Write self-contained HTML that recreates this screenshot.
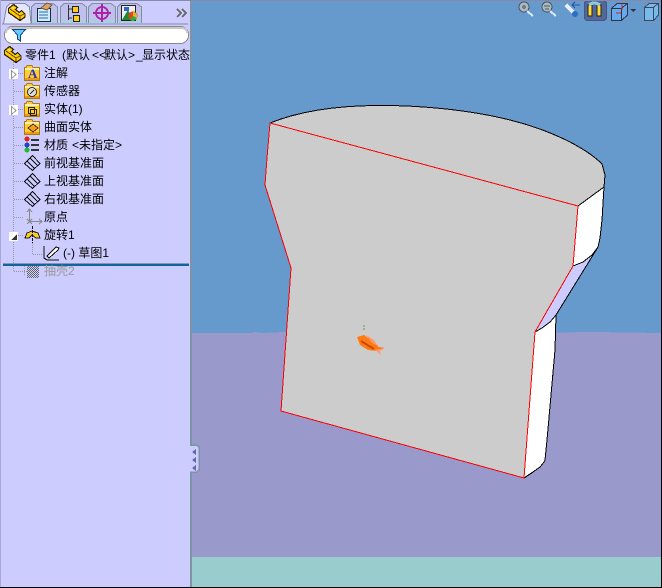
<!DOCTYPE html>
<html><head><meta charset="utf-8"><style>
html,body{margin:0;padding:0;width:662px;height:588px;overflow:hidden;background:#6699cc}
svg{display:block;position:absolute;left:0;top:0}
text{font-family:"WenQuanYi Zen Hei","Liberation Sans","Noto Sans CJK SC",sans-serif;font-size:12px;fill:#000}
</style></head><body>
<svg width="662" height="588" viewBox="0 0 662 588" shape-rendering="crispEdges">
<defs>
<pattern id="dith" width="2" height="2" patternUnits="userSpaceOnUse"><rect width="2" height="2" fill="#ccccff"/><rect width="1" height="1" fill="#666"/><rect x="1" y="1" width="1" height="1" fill="#666"/></pattern>
<g id="fld"><path d="M0.500 2.500H2L3 0.500H8L9 2.500H15.500V15.500H0.500Z" fill="#ffcc33" stroke="#a87a10"/><path d="M1 3h14v2H1z" fill="#fff0b0"/><path d="M1 13h14v2H1z" fill="#ee9911"/></g>
<g id="pl"><path d="M0.500 8.500L8.500 0.500L16 8.500L8.500 15.500Z" fill="none" stroke="#111"/><path d="M3 6L11 14M6 3L14 11" fill="none" stroke="#111"/></g>
<g id="part"><path d="M0.500 4.500L5.500 0.500L9.500 3.500L7.500 5.500L11.500 8.500L13.500 6.500L17 10V13L12 16.500L0.500 8.500Z" fill="#ffcc00" stroke="#332200" stroke-width="1.300"/><path d="M2 5L12 12M12 12V16M12 12L16 10" fill="none" stroke="#664400"/><path d="M4 3L7 4L5 5Z" fill="#ffee99"/></g>
<g id="exp"><rect x="-1" y="-1" width="9" height="10" fill="#fff"/><path d="M1.500 0.500L6 4.500L1.500 8.500Z" fill="#fff" stroke="#999"/></g>
</defs>

<!-- viewport -->
<rect x="191" y="0" width="471" height="588" fill="#6699cc"/>
<path d="M191 333h60l4-1 8 1 20-1 30 1 40-1 60 1 50-1 60 1 70-1 70 1V557H191Z" fill="#9999cc"/>
<rect x="191" y="557" width="471" height="30" fill="#99cccc"/>

<!-- part -->
<path d="M578 206L593 195L604 187L602 220L600 238L598 247L592 255L583 262L573 266Z" fill="#fff"/>
<path d="M573 266L583 262L592 255L598 247L556 315L550 322L542 328L535 332Z" fill="#ccccff"/>
<path d="M535 332L542 328L550 322L556 315L555 350L547 440L545 460L544 462L540 467L533 472L524 478Z" fill="#fff"/>
<path d="M270 123C295 113 330 106 375 105.500C420 105 470 110 510 120C550 130 585 147 602 164L605 175L604 187L593 195L578 206L573 266L535 332L524 478L281 411L291 268L265 185L267 158Z" fill="#cccccc"/>
<g fill="none" stroke="#000" stroke-width="1">
<path d="M270 123C295 113 330 106 375 105.500C420 105 470 110 510 120C550 130 585 147 602 164L605 175L604 187L602 220L600 238L598 247L556 315"/>
<path d="M578 206L593 195L604 187"/>
<path d="M573 266L583 262L592 255L598 247"/>
<path d="M535 332L542 328L550 322L556 315L555 350L547 440L545 460L544 462L540 467L533 472L524 478"/>
</g>
<g fill="none" stroke="#f00" stroke-width="1">
<path d="M270 123L578 206L573 266L535 332L524 478L281 411L291 268L265 185L267 158Z"/>
</g>

<!-- fish -->
<path d="M357 337L364 335L372 341L379 347L385 348L380 351L381 356L376 351L368 350L360 345Z" fill="#ff7a10"/>
<path d="M374 350L380 349L385 348L380 351L381 356L376 351Z" fill="#ff9a80"/>
<path d="M366 335L374 340L378 346L372 343Z" fill="#ff9a70"/>
<path d="M361 341L374 349" stroke="#c84a00" stroke-width="2" fill="none"/>
<rect x="363" y="325" width="2" height="2" fill="#a0b0a0"/><rect x="363" y="328" width="2" height="2" fill="#c0a080"/>

<!-- viewport toolbar -->
<rect x="584.500" y="0.500" width="22" height="20" rx="3" fill="#556699" stroke="#445588"/>
<rect x="588" y="5" width="4" height="11" fill="#ffdd33" stroke="#222" stroke-width=".8"/>
<rect x="597" y="5" width="4" height="11" fill="#ffdd33" stroke="#222" stroke-width=".8"/>
<path d="M589 5Q594 1 600 5" fill="none" stroke="#88ccdd" stroke-width="3"/>
<circle cx="524" cy="7" r="5" fill="#aabbc0" stroke="#445566"/><circle cx="524" cy="7" r="2" fill="#778"/><path d="M527 11L533 16" stroke="#dde6ff" stroke-width="2"/>
<circle cx="547" cy="7" r="5" fill="#aabbc0" stroke="#445566"/><path d="M544 6h6M545 9h4" stroke="#556"/><path d="M550 11L556 16" stroke="#dde6ff" stroke-width="2"/>
<path d="M566 5L575 14" stroke="#e4eeff" stroke-width="4"/><circle cx="575" cy="14" r="3" fill="#2f6fc4"/><path d="M572 5h8M575 2l-3 3 3 3" stroke="#2255aa" fill="none"/>
<path d="M611.500 8.500L617 3.500H627.500V15L621.500 20.500H611.500Z" fill="#66aaee" stroke="#334"/><path d="M611.500 8.500H621.500V20M621.500 8.500L627 3.500" fill="none" stroke="#334"/><path d="M622 4v6M616 13h5" stroke="#dd2222"/>
<path d="M630 9h6l-3 3z" fill="#334"/>
<path d="M644.500 7.500L649 3.500H658.500V15L653.500 20.500H644.500Z" fill="#77bbee" stroke="#445"/><path d="M644.500 7.500H653.500V20M653.500 7.500L658 3.500" fill="none" stroke="#445"/>

<!-- sidebar -->
<rect x="0" y="0" width="190" height="588" fill="#ccccff"/>
<rect x="190" y="0" width="2" height="445" fill="#7f93a6"/>
<rect x="190" y="472" width="2" height="116" fill="#7f93a6"/>
<rect x="0" y="0" width="662" height="1" fill="#8888aa"/>
<rect x="0" y="0" width="1" height="588" fill="#a8a8d8"/>
<!-- handle -->
<rect x="190" y="445" width="9" height="27" fill="#ccccff"/>
<path d="M190 445H197L199 447V470L197 472H190" fill="none" stroke="#7f93a6" stroke-width="1.500"/>
<path d="M192 452L196 449V455ZM192 460L196 457V463ZM192 468L196 465V471Z" fill="#6666aa"/>

<!-- tabs -->
<g>
<path d="M31.500 23V7L35 3.500H53L57.500 7V23" fill="#c0c0ec" stroke="#7f8fa0"/>
<path d="M60.500 23V7L64 3.500H82L86.500 7V23" fill="#c0c0ec" stroke="#7f8fa0"/>
<path d="M88.500 23V7L92 3.500H111L115.500 7V23" fill="#c0c0ec" stroke="#7f8fa0"/>
<path d="M117.500 23V7L121 3.500H137L141.500 7V23" fill="#c0c0ec" stroke="#7f8fa0"/>
<path d="M32 20H57V23H32ZM61 20H86V23H61ZM89 20H115V23H89ZM118 20H141V23H118Z" fill="#a8d0e0"/>
<path d="M3.500 24L6.500 7L10 3.500H25L29.500 7L31 24" fill="#e6e6ff" stroke="#7f8fa0"/>
<use href="#part" x="8" y="4"/>
<rect x="37.500" y="8.500" width="13" height="13" fill="#cceeff" stroke="#224"/><path d="M39 12h9M39 15h9M39 18h9" stroke="#3366aa"/><path d="M41 8L47 3L52 5L47 10Z" fill="#e8a060" stroke="#664"/>
<path d="M68.500 5V20M68 9H72M68 18H72" stroke="#333" fill="none"/><rect x="72.500" y="6.500" width="6" height="6" fill="#ffcc22" stroke="#222"/><rect x="73.500" y="15.500" width="6" height="6" fill="#ffcc22" stroke="#222"/>
<circle cx="102" cy="13" r="6" fill="none" stroke="#aa22aa" stroke-width="1.800"/><path d="M102 4V22M93 13H111" stroke="#aa22aa" stroke-width="1.600"/>
<rect x="121.500" y="5.500" width="14" height="15" fill="#eee" stroke="#222"/><path d="M122 20L128 10L134 20Z" fill="#228833"/><rect x="124" y="7" width="5" height="4" fill="#3366cc"/><circle cx="133" cy="16" r="4.500" fill="#dd4422"/><path d="M133 12A4.500 4.500 0 0 1 137 18L133 16Z" fill="#ddbb22"/><path d="M133 16L137 18A4.500 4.500 0 0 1 130 20Z" fill="#33aa44"/>
<path d="M177 9L181 13L177 17M182 9L186 13L182 17" fill="none" stroke="#666" stroke-width="1.500"/>
<path d="M2 24H188" stroke="#8888aa"/>
<rect x="4.500" y="26.500" width="184" height="17" rx="8" fill="#fff" stroke="#888"/>
<path d="M6 33Q6 28 13 28H181Q187 28 187 33" fill="none" stroke="#c8c8c8" stroke-width="2"/>
<path d="M12.500 29.500H25.500L20.500 35V41L17.500 39V35Z" fill="#66ccff" stroke="#114488"/>
</g>

<!-- tree lines -->
<g fill="none" stroke="#999" stroke-dasharray="1 1">
<path d="M13.500 62V271"/>
<path d="M14 73.500h9M14 91.500h9M14 109.500h9M14 127.500h9M14 145.500h9M14 163.500h9M14 181.500h9M14 199.500h9M14 217.500h9M14 235.500h9M14 271.500h13"/>
<path d="M32.500 243V254M33 254.500h10"/>
</g>

<use href="#part" x="4" y="46"/>
<text y="59"><tspan x="25">零件1</tspan><tspan x="62">(默认</tspan><tspan x="92">&lt;&lt;</tspan><tspan x="104">默认</tspan><tspan x="128">&gt;</tspan><tspan x="136">_</tspan><tspan x="142">显示状态</tspan></text>

<use href="#exp" x="10" y="70"/>
<use href="#fld" x="24" y="65"/><text x="28" y="78" style="font-family:'Liberation Serif';font-size:13px;font-weight:bold;fill:#2233bb">A</text>
<text x="44" y="77">注解</text>

<use href="#fld" x="24" y="83"/><circle cx="32" cy="92" r="4.500" fill="#ddd" stroke="#333"/><path d="M30 94L34 90" stroke="#333"/>
<text x="44" y="95">传感器</text>

<use href="#exp" x="10" y="106"/>
<use href="#fld" x="24" y="101"/><rect x="28.500" y="107.500" width="6" height="6" fill="none" stroke="#222" stroke-width="1.400"/><rect x="30.500" y="109.500" width="6" height="6" fill="none" stroke="#222"/>
<text x="44" y="113">实体(1)</text>

<use href="#fld" x="24" y="119"/><path d="M28 128L33 124L38 128L33 132Z" fill="#ff9911" stroke="#333"/>
<text x="44" y="131">曲面实体</text>

<circle cx="27" cy="139" r="2.500" fill="#dd2222"/><circle cx="27" cy="145" r="2.500" fill="#2244cc"/><circle cx="27" cy="150" r="2.500" fill="#22bb33"/>
<path d="M31 140h8M31 145h8M31 150h8" stroke="#333" stroke-width="2"/>
<text y="149"><tspan x="44">材质</tspan><tspan x="72">&lt;未指定&gt;</tspan></text>

<use href="#pl" x="24" y="155"/><text x="44" y="167">前视基准面</text>
<use href="#pl" x="24" y="173"/><text x="44" y="185">上视基准面</text>
<use href="#pl" x="24" y="191"/><text x="44" y="203">右视基准面</text>

<path d="M29.500 209V222M29 221.500H42M27 219l5 5M32 219l-5 5" stroke="#888" fill="none"/><path d="M27 212l2.500-3 2.500 3M39 219l3 2.500-3 2.500" stroke="#888" fill="none"/>
<text x="44" y="221">原点</text>

<rect x="9" y="232" width="9" height="9" fill="#fff"/><path d="M11 240H17V234Z" fill="#333"/>
<path d="M25 238L27 233L32 231L38 233L40 238L36 238L32 235L29 238Z" fill="#ffcc22" stroke="#222"/>
<path d="M32.500 226V243" stroke="#111" stroke-dasharray="3 1"/>
<text x="44" y="239">旋转1</text>

<path d="M44 246V258L47 260H59" fill="none" stroke="#111"/><path d="M47 256L56 247L59 248L58 250L49 258Z" fill="#fff" stroke="#111"/>
<text x="63" y="257">(-) 草图1</text>

<rect x="3" y="263" width="186" height="1" fill="#8f8fc0"/>
<rect x="3" y="264" width="186" height="2" fill="#116699"/>

<path d="M24.500 266V276" stroke="#999" stroke-dasharray="1 1"/>
<rect x="27" y="266" width="12" height="12" fill="url(#dith)"/>
<text x="44" y="275" style="fill:#999">抽壳2</text>

<!-- frame -->
<rect x="0" y="587" width="662" height="1" fill="#000"/>
<rect x="661" y="0" width="1" height="588" fill="#000"/>
</svg>
</body></html>
